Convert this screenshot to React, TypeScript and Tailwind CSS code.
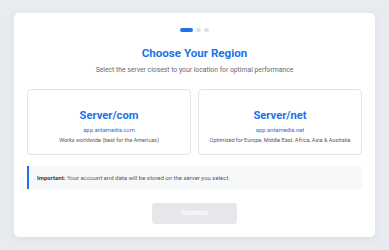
export default function App() {
  return (
    <div
      className="w-[389px] h-[250px] bg-[#e8ecf0] pt-[13px] px-[14px] overflow-hidden"
      style={{ fontFamily: "Roboto, 'Liberation Sans', sans-serif" }}
    >
      <div className="h-[224px] bg-white rounded-[5px] shadow-[0_2px_10px_rgba(0,0,0,0.06)] px-[13px] pt-[15px] flex flex-col">
        {/* Step dots */}
        <div className="flex justify-center items-center gap-[3px]">
          <span className="w-[13px] h-[4px] rounded-full bg-[#1a73e8]" />
          <span className="w-[5px] h-[4px] rounded-full bg-[#dde0e4]" />
          <span className="w-[5px] h-[4px] rounded-full bg-[#dde0e4]" />
        </div>

        <h1 className="mt-[13px] text-center text-[11.6px] leading-[16px] font-bold text-[#1a73e8]">
          Choose Your Region
        </h1>
        <p className="mt-[5px] text-center text-[6.8px] leading-[9px] text-[#666a70]">
          Select the server closest to your location for optimal performance
        </p>

        <div className="mt-[14px] grid grid-cols-2 gap-[7px]">
          <div className="h-[66px] border border-[#e1e4e8] rounded-[4px] flex flex-col items-center pt-[18px]">
            <div className="text-[11.2px] leading-[15px] font-bold text-[#1a73e8]">Server/com</div>
            <div className="mt-[3px] text-[5.8px] leading-[8px] text-[#1a73e8]">app.antamedia.com</div>
            <div className="mt-[2px] text-[5.5px] leading-[8px] text-[#555a60]">
              Works worldwide (best for the Americas)
            </div>
          </div>
          <div className="h-[66px] border border-[#e1e4e8] rounded-[4px] flex flex-col items-center pt-[18px]">
            <div className="text-[11.2px] leading-[15px] font-bold text-[#1a73e8]">Server/net</div>
            <div className="mt-[3px] text-[5.8px] leading-[8px] text-[#1a73e8]">app.antamedia.net</div>
            <div className="mt-[2px] text-[5.5px] leading-[8px] text-[#555a60]">
              Optimized for Europe, Middle East, Africa, Asia &amp; Australia
            </div>
          </div>
        </div>

        <div className="mt-[11px] h-[23px] bg-[#f7f8fa] border-l-2 border-[#1a73e8] rounded-r-[3px] flex items-center pl-[8px]">
          <p className="text-[6px] leading-[8px] text-[#555a60]">
            <span className="font-bold text-[#3c4045]">Important:</span> Your account and data will be stored on the server you select.
          </p>
        </div>

        <div className="mt-[14px] flex justify-center">
          <button className="w-[85px] h-[21px] rounded-[3px] bg-[#e5e7ea] text-white text-[6.5px] font-bold">
            Continue
          </button>
        </div>
      </div>
    </div>
  );
}
